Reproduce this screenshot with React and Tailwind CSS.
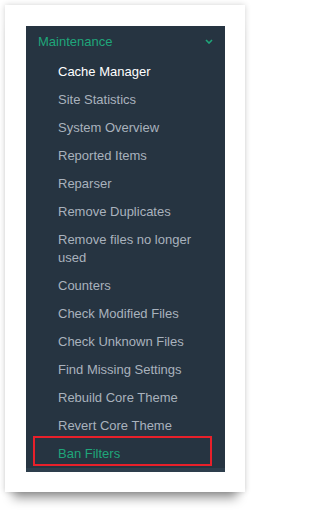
import React from 'react';

const items = [
    'Cache Manager',
    'Site Statistics',
    'System Overview',
    'Reported Items',
    'Reparser',
    'Remove Duplicates',
    'Remove files no longer used',
    'Counters',
    'Check Modified Files',
    'Check Unknown Files',
    'Find Missing Settings',
    'Rebuild Core Theme',
    'Revert Core Theme',
    'Ban Filters',
];

const Chevron = () => (
    <svg width="8" height="5" viewBox="0 0 8 5" fill="none">
        <path d="M1 1l3 3 3-3" stroke="#1fa67a" strokeWidth="1.6" />
    </svg>
);

const MenuItem = ({ label }) => {
    const isActive = label === 'Cache Manager';
    const isHighlighted = label === 'Ban Filters';

    return (
        <li className="relative">
            <a
                className={
                    'block py-[5px] pl-[32px] pr-[12px] text-[13px] leading-[18px] ' +
                    (isActive ? 'text-white' : isHighlighted ? 'text-[#1fa67a]' : 'text-[#a9b2bd]')
                }
            >
                {label}
            </a>
            {isHighlighted && (
                <div className="pointer-events-none absolute left-[7px] right-[13px] top-[-4px] bottom-[2px] border-2 border-[#e8202a]" />
            )}
        </li>
    );
};

export default function App() {
    return (
        <div className="min-h-screen bg-white pt-[5px] pl-[5px] font-['Liberation_Sans',Arial,sans-serif]">
            <div className="w-[240px] bg-white pt-[21px] pl-[21px] pr-[20px] pb-[20px] shadow-[0_0_6px_rgba(0,0,0,0.18),0_14px_10px_-8px_rgba(0,0,0,0.4)]">
                <div className="w-[199px] bg-[#263441]">
                    <div className="flex h-[31px] items-center justify-between pl-[12px] pr-[12px]">
                        <span className="text-[13px] text-[#1fa67a]">Maintenance</span>
                        <Chevron />
                    </div>
                    <ul className="pt-[1px]">
                        {items.map((label) => (
                            <MenuItem key={label} label={label} />
                        ))}
                    </ul>
                    <div className="h-[4px] bg-[#2d3e4c]" />
                </div>
            </div>
        </div>
    );
}
